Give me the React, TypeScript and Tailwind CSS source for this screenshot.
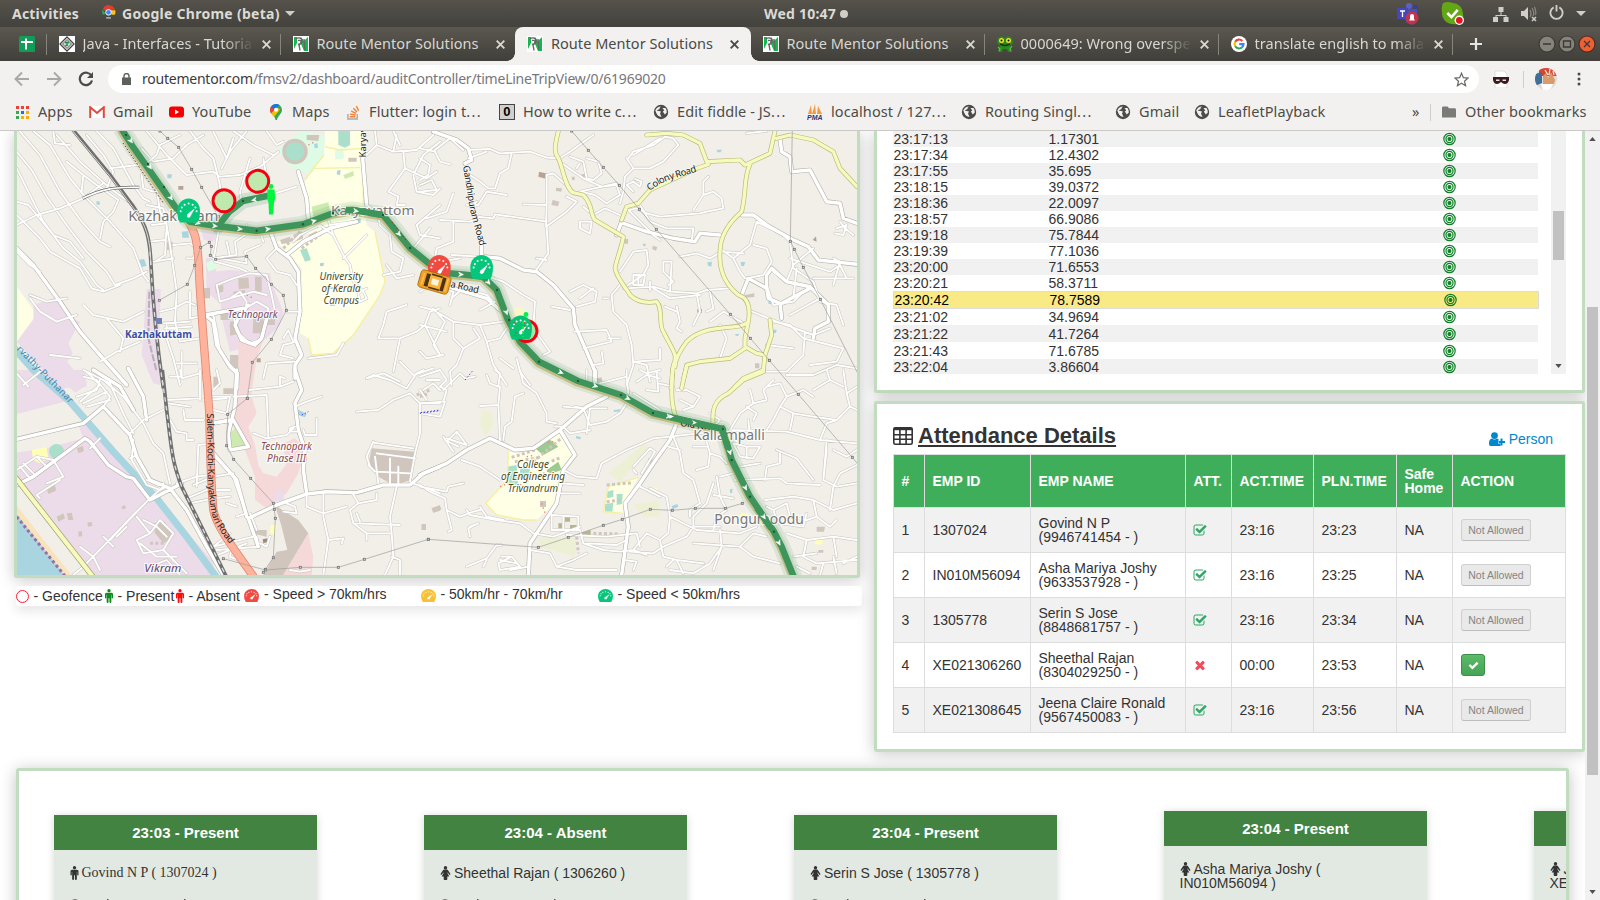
import React from "react";

type Kids = { children?: React.ReactNode };

/* ---------- shared icons ---------- */

const CHECK_SQUARE =
  "M1472 930v318q0 119-84.5 203.5t-203.5 84.5h-832q-119 0-203.5-84.5t-84.5-203.5v-832q0-119 84.5-203.5t203.5-84.5h832q63 0 117 25 15 7 18 23 3 17-9 29l-49 49q-14 14-32 8-23-6-45-6h-832q-66 0-113 47t-47 113v832q0 66 47 113t113 47h832q66 0 113-47t47-113v-254q0-13 9-22l64-64q15-15 35-7t20 29zm231-489l-814 814q-24 24-57 24t-57-24l-430-430q-24-24-24-57t24-57l110-110q24-24 57-24t57 24l263 263 647-647q24-24 57-24t57 24l110 110q24 24 24 57t-24 57z";
const TIMES =
  "M1490 1322q0 40-28 68l-136 136q-28 28-68 28t-68-28l-294-294-294 294q-28 28-68 28t-68-28l-136-136q-28-28-28-68t28-68l294-294-294-294q-28-28-28-68t28-68l136-136q28-28 68-28t68 28l294 294 294-294q28-28 68-28t68 28l136 136q28 28 28 68t-28 68l-294 294 294 294q28 28 28 68z";
const CHECK =
  "M1671 566q0 40-28 68l-724 724-136 136q-28 28-68 28t-68-28l-136-136-362-362q-28-28-28-68t28-68l136-136q28-28 68-28t68 28l294 295 656-657q28-28 68-28t68 28l136 136q28 28 28 68z";

function Glyph({ d, className }: { d: string; className: string }) {
  return (
    <svg viewBox="0 0 1792 1792" className={className} fill="currentColor">
      <path d={d} />
    </svg>
  );
}

function Male({ className }: { className: string }) {
  return (
    <svg viewBox="0 0 9 14" className={"shrink-0 " + className} fill="currentColor">
      <circle cx="4.500" cy="1.700" r="1.650" />
      <path d="M2 3.700h5q1.500 0 1.500 1.500v3.600q0 .7-.65.7t-.65-.7V5.800h-.35v7.200q0 .9-.95.9t-.95-.9V9.300h-.9V13q0 .9-.95.9t-.95-.9V5.800H1.800v3q0 .7-.65.7T.5 8.800V5.200Q.5 3.700 2 3.700z" />
    </svg>
  );
}

function Female({ className }: { className: string }) {
  return (
    <svg viewBox="0 0 10 14" className={"shrink-0 " + className} fill="currentColor">
      <circle cx="5" cy="1.7" r="1.7" />
      <path d="M3.6 3.6h2.8c.5 0 .9.3 1.1.6l2.3 3.5c.4.8-.6 1.5-1.2.8L7 6.2v1l1.8 3.3H6.8v2.7c0 .5-.3.8-.8.8H4c-.5 0-.8-.3-.8-.8v-2.7H1.2L3 7.2v-1L1.4 8.5c-.6.7-1.6 0-1.2-.8l2.3-3.5c.2-.3.6-.6 1.1-.6z" />
    </svg>
  );
}

function GaugeShape({ color }: { color: string }) {
  const dots = [-85, -58, -30, 0, 30, 58, 85];
  return (
    <>
      <path d="M4 36Q0 30 0 18A17 18 0 0 1 34 18Q34 30 30 36z" fill={color} />
      {dots.map((a) => (
        <circle
          key={a}
          cx={17 + 12 * Math.sin((a * Math.PI) / 180)}
          cy={20 - 12.5 * Math.cos((a * Math.PI) / 180)}
          r="1.5"
          fill="#fff"
        />
      ))}
      <path d="M15 24l10-8-6 11z" fill="#fff" stroke="#fff" strokeWidth="1" />
      <circle cx="17" cy="26" r="2.6" fill="#fff" />
    </>
  );
}

function LegendGauge({ color }: { color: string }) {
  return (
    <svg viewBox="0 0 34 36" preserveAspectRatio="none" className="h-[13px] w-[15px]">
      <GaugeShape color={color} />
    </svg>
  );
}

/* ---------- desktop top bar ---------- */

function TopBar() {
  return (
    <div className="flex h-[27px] items-center bg-linear-to-b from-[#55524b] to-[#43423d] text-[14px] font-bold text-[#dcdad5]">
      <div className="w-[101px] pl-[12px] tracking-[0.2px]">Activities</div>
      <svg viewBox="0 0 16 16" className="-mt-[2px] h-[15px] w-[15px]">
        <path d="M8 0a8 8 0 0 1 7 5H8a3.500 3.500 0 0 0-3 2L2 4a7 7 0 0 1 6-4z" fill="#e33b2e" />
        <path d="M1.500 4.500L5 9.500l-3 1A8 8 0 0 1 1.500 4.500z" fill="#2da94f" />
        <path d="M10.500 5.500H15.200a8 8 0 0 1-.5 5l-3.500 0z" fill="#fcc31e" />
        <circle cx="8" cy="7.800" r="3.300" fill="#fff" />
        <circle cx="8" cy="7.800" r="2.500" fill="#4285f4" />
        <path d="M5.500 13h5v1.500h-5z" fill="#bbb" />
      </svg>
      <div className="ml-[6px] w-[163px] whitespace-nowrap tracking-[0.27px]">Google Chrome (beta)</div>
      <svg viewBox="0 0 10 5" className="h-[5px] w-[10px]" fill="#d0cec9">
        <path d="M0 0h10L5 5z" />
      </svg>
      <div className="ml-[469px] w-[76px] pb-[1px] whitespace-nowrap tracking-[0.22px]">Wed 10:47</div>
      <div className="h-[8px] w-[8px] rounded-full bg-[#d0cec9]" />
      <svg viewBox="0 0 22 22" className="ml-[549px] h-[22px] w-[22px]">
        <circle cx="12" cy="3" r="3" fill="#5b5fc7" />
        <circle cx="18.500" cy="4" r="2.300" fill="#3b3e94" />
        <path d="M7 6h13v9a6 6 0 0 1-12 1z" fill="#4a4fb5" />
        <rect x="0" y="5" width="11" height="11" fill="#4648b8" />
        <path d="M3 8h5M5.500 8v6" stroke="#fff" strokeWidth="1.300" />
        <circle cx="15" cy="15" r="6.500" fill="#c4314b" />
        <path d="M12 17.500h6l-1-1.500v-3a2 2 0 0 0-4 0v3z" fill="#fff" />
      </svg>
      <svg viewBox="0 0 22 22" className="ml-[22px] h-[23px] w-[23px]">
        <path d="M2 1q5-2 9 0a10 10 0 0 1 10 10q1 6-1 9-5 2-9 1A10 10 0 0 1 1 10q-1-6 1-9z" fill="#62a714" />
        <path d="M6 10.500l4 4 6-7" stroke="#fff" strokeWidth="2.500" fill="none" />
        <circle cx="17.500" cy="17.500" r="4.500" fill="#fff" />
        <circle cx="17.500" cy="17.500" r="3.200" fill="#e81123" />
      </svg>
      <svg viewBox="0 0 16 16" className="ml-[29px] h-[16px] w-[16px]" fill="#d0cec9">
        <path d="M5.500 1h5v5h-5zM0 11h5v5H0zM10.500 11h5v5h-5zM7.500 6h1v3h5v2h-1v-1h-9v1h-1V9h5z" />
      </svg>
      <svg viewBox="0 0 16 16" className="ml-[12px] h-[16px] w-[16px]" fill="#d0cec9">
        <path d="M0 5h3l4-4v13l-4-4H0z" />
        <path d="M9 4q2 3.500 0 7M11 2q3 5 1 8M13.500 1q2 5 1 8" stroke="#8b8984" fill="none" strokeWidth="1.200" />
        <path d="M11 11l4 4m0-4l-4 4" stroke="#d0cec9" strokeWidth="1.500" />
      </svg>
      <svg viewBox="0 0 16 16" className="-mt-[2px] ml-[12px] h-[15px] w-[15px]" fill="none" stroke="#d0cec9" strokeWidth="2">
        <path d="M5 2.500a6.500 6.500 0 1 0 6 0M8 0v7" />
      </svg>
      <svg viewBox="0 0 10 5" className="ml-[12px] h-[5px] w-[10px]" fill="#d0cec9">
        <path d="M0 0h10L5 5z" />
      </svg>
    </div>
  );
}

/* ---------- tab strip ---------- */

function RouteLogo() {
  return (
    <svg viewBox="0 0 16 16" className="h-[16px] w-[16px] shrink-0">
      <rect width="16" height="16" fill="#fff" />
      <path d="M1 1h3v6L1 13zM8 1l3 4 4-4v14h-4l-3-7z" fill="#0dba4b" />
      <path d="M3 2.500q5-2 6 2 .500 3-3 4l1 6M5 4.500q3-.5 3 1.500 0 2-3 2.500M11 3l1 11" stroke="#6b6466" fill="none" strokeWidth="1.400" />
    </svg>
  );
}
function JavaLogo() {
  return (
    <svg viewBox="0 0 16 16" className="h-[16px] w-[16px] shrink-0">
      <rect width="16" height="16" fill="#fff" />
      <path d="M8 1l7 7-7 7-7-7z" fill="#fff" stroke="#444" strokeWidth="1.300" />
      <path d="M8 3.500L12.500 8 8 12.500 3.500 8z" fill="#c8dccd" stroke="#555" />
      <path d="M6 6.500h4M8 6v4M6 10l3-1" stroke="#1f8a46" strokeWidth="1.300" />
    </svg>
  );
}
function FrogLogo() {
  return (
    <svg viewBox="0 0 16 16" className="h-[16px] w-[16px] shrink-0">
      <path d="M1 2l4-2 3 2 3-2 4 2 1 5-3 3 2 6h-4l-1-3-4 0-1 3H1l2-6-3-3z" fill="#2b8a1e" />
      <path d="M3 8q5 3 10 0" stroke="#123d10" fill="none" strokeWidth="1.500" />
      <path d="M1 11l2 2-1 2M15 10l-2 3 1 2" stroke="#54c13a" fill="none" strokeWidth="1.300" />
      <circle cx="4.500" cy="4.500" r="2.500" fill="#f4e02c" />
      <circle cx="11.500" cy="4.500" r="2.500" fill="#f4e02c" />
      <circle cx="4.500" cy="4.500" r="1" fill="#111" />
      <circle cx="11.500" cy="4.500" r="1" fill="#111" />
    </svg>
  );
}
function GoogleLogo() {
  return (
    <svg viewBox="0 0 16 16" className="h-[16px] w-[16px] shrink-0" fill="none" strokeWidth="2.200">
      <circle cx="8" cy="8" r="8" fill="#fff" />
      <path d="M11.300 4.900A4.500 4.500 0 0 0 4.200 5.700" stroke="#ea4335" />
      <path d="M4.200 5.700a4.500 4.500 0 0 0 0 4.600" stroke="#fbbc05" />
      <path d="M4.200 10.300a4.500 4.500 0 0 0 6.900 1" stroke="#34a853" />
      <path d="M11 11.400A4.500 4.500 0 0 0 12.500 8.100H8.200" stroke="#4285f4" />
    </svg>
  );
}

function Cross({ color }: { color: string }) {
  return (
    <svg viewBox="0 0 9 9" className="h-[9px] w-[9px] shrink-0" stroke={color} strokeWidth="1.900">
      <path d="M.7.700l7.600 7.600M8.300.7L.7 8.300" />
    </svg>
  );
}

type TabProps = { icon: React.ReactNode; label: string; active?: boolean; sep?: boolean; fade?: boolean };

function Tab({ icon, label, active, sep, fade }: TabProps) {
  return (
    <div
      className={
        active
          ? "relative flex h-[34px] w-[236px] items-center rounded-t-[8px] bg-[#f2f1f0] pl-[12px] text-[#4a4a46]"
          : "relative flex h-[34px] w-[234px] items-center pl-[11.500px] text-[#d9d7d2]"
      }
    >
      {active && (
        <>
          <span className="absolute -left-[8px] bottom-0 h-[8px] w-[8px] bg-[radial-gradient(circle_at_0_0,transparent_7.5px,#f2f1f0_8px)]" />
          <span className="absolute -right-[8px] bottom-0 h-[8px] w-[8px] bg-[radial-gradient(circle_at_100%_0,transparent_7.5px,#f2f1f0_8px)]" />
        </>
      )}
      {icon}
      <span
        className={
          fade
            ? "ml-[8px] w-[171px] whitespace-nowrap [mask-image:linear-gradient(to_right,#000_82%,transparent)]"
            : "ml-[8px] w-[171px] whitespace-nowrap"
        }
      >
        {label}
      </span>
      <span className="ml-[8px] flex">
        <Cross color={active ? "#4a4a46" : "#d9d7d2"} />
      </span>
      {sep && <span className="ml-auto h-[21px] w-px bg-[#86847d]" />}
    </div>
  );
}

function TabStrip() {
  return (
    <div className="flex h-[34px] items-center bg-linear-to-b from-[#5b5850] to-[#403f3a] text-[14.500px] tracking-[0.04px]">
      <div className="flex h-full w-[47px] items-center pl-[19px]">
        <svg viewBox="0 0 16 16" className="h-[16px] w-[16px]">
          <rect width="16" height="16" rx="1.500" fill="#0f9d58" />
          <path d="M2 6h12M7 2.500V13.500" stroke="#fff" strokeWidth="2" />
        </svg>
        <span className="ml-[11px] h-[21px] w-px bg-[#86847d]" />
      </div>
      <Tab icon={<JavaLogo />} label="Java - Interfaces - Tutoria" sep fade />
      <Tab icon={<RouteLogo />} label="Route Mentor Solutions" />
      <Tab icon={<RouteLogo />} label="Route Mentor Solutions" active />
      <Tab icon={<RouteLogo />} label="Route Mentor Solutions" sep />
      <Tab icon={<FrogLogo />} label="0000649: Wrong overspe" sep fade />
      <Tab icon={<GoogleLogo />} label="translate english to mala" sep fade />
      <svg viewBox="0 0 12 12" className="ml-[17px] h-[12px] w-[12px]" stroke="#e8e6e1" strokeWidth="2.200">
        <path d="M6 0v12M0 6h12" />
      </svg>
      <svg viewBox="0 0 58 18" className="ml-auto mr-[4px] h-[18px] w-[58px]" strokeWidth="1.200">
        <g fill="#85837b" stroke="#3a3935">
          <circle cx="9" cy="9" r="8" />
          <circle cx="29" cy="9" r="8" />
        </g>
        <circle cx="49" cy="9" r="8" fill="#ee5f33" stroke="#4a2d22" />
        <path d="M5 9h8M25.500 6h7v6h-7zM46 6l6 6m0-6l-6 6" fill="none" stroke="#3a3935" strokeWidth="1.300" />
      </svg>
    </div>
  );
}

/* ---------- toolbar ---------- */

function Toolbar() {
  return (
    <div className="flex h-[36px] items-center bg-[#f2f1f0]">
      <svg viewBox="0 0 16 16" className="ml-[14px] h-[16px] w-[16px]" fill="none" stroke="#a9a8a5" strokeWidth="1.900">
        <path d="M15 8H2M8 1.500L1.500 8 8 14.500" />
      </svg>
      <svg viewBox="0 0 16 16" className="ml-[16px] h-[16px] w-[16px]" fill="none" stroke="#a9a8a5" strokeWidth="1.900">
        <path d="M1 8h13M8 1.500L14.500 8 8 14.500" />
      </svg>
      <svg viewBox="0 0 16 16" className="ml-[16px] h-[16px] w-[16px]">
        <path d="M13.500 5A6.200 6.200 0 1 0 14 9.500" fill="none" stroke="#4a4a46" strokeWidth="2.200" />
        <path d="M15 1v6H9z" fill="#4a4a46" />
      </svg>
      <div className="ml-[14px] flex h-[28px] w-[1371px] items-center rounded-full bg-white pl-[14px] text-[14px]">
        <svg viewBox="0 0 9 12" className="h-[12px] w-[9px]">
          <path d="M0 4.500h9V12H0z" fill="#5f5f5c" />
          <path d="M2 5V3a2.500 2.500 0 0 1 5 0v2" fill="none" stroke="#5f5f5c" strokeWidth="1.400" />
        </svg>
        <span className="ml-[11px] pb-[1px] whitespace-nowrap tracking-[-0.23px] text-[#77767a]">
          <span className="text-[#3a3a3a]">routementor.com</span>/fmsv2/dashboard/auditController/timeLineTripView/0/61969020
        </span>
        <svg viewBox="0 0 24 24" className="ml-auto mr-[10px] h-[15px] w-[15px]" fill="none" stroke="#6b6b68" strokeWidth="2">
          <path d="M12 2l3 7 7.500.7-5.700 5 1.700 7.300-6.500-3.900L5.500 22l1.700-7.300-5.700-5L9 9z" />
        </svg>
      </div>
      <svg viewBox="0 0 18 18" className="ml-[13px] h-[18px] w-[18px]">
        <path d="M3 1h9l3 3v14H3z" fill="#fff" stroke="#ddd" />
        <path d="M1 7h16v3q-1 4-4 4-2 0-4-2-2 2-4 2-3 0-4-4z" fill="#3a1a1c" />
        <path d="M4 9.500h3.500v1.500H4zM10.500 9.500H14v1.500h-3.500z" fill="#e8dede" />
      </svg>
      <span className="ml-[13px] h-[17px] w-px bg-[#cfcecb]" />
      <svg viewBox="0 0 22 22" className="ml-[11px] h-[22px] w-[22px]">
        <clipPath id="av">
          <circle cx="11" cy="11" r="11" />
        </clipPath>
        <g clipPath="url(#av)">
          <rect width="22" height="22" fill="#e2dcd4" />
          <path d="M4 0h18v8H4z" fill="#d8452e" />
          <path d="M0 6l7-2v11l-7 3z" fill="#3f6f99" />
          <path d="M8 8l3-3 2 5 3-6 4 8-1 4H8z" fill="#d99a6c" />
          <path d="M10 2l3 5M15 1l-1 6M18 3l1 4" stroke="#f5e9e2" strokeWidth="1.300" />
          <path d="M6 16h12l-3 6H8z" fill="#fff" />
        </g>
      </svg>
      <svg viewBox="0 0 4 14" className="ml-[20px] h-[14px] w-[4px]" fill="#4a4a46">
        <circle cx="2" cy="2" r="1.500" />
        <circle cx="2" cy="7" r="1.500" />
        <circle cx="2" cy="12" r="1.500" />
      </svg>
    </div>
  );
}

/* ---------- bookmarks ---------- */

function Globe() {
  return (
    <svg viewBox="0 0 16 16" className="h-[16px] w-[16px]">
      <circle cx="8" cy="8" r="7.200" fill="#4b4b48" />
      <path d="M8 2.500q-2 1-1.500 2.500l-3 1.500 4.500 1-1 2 1.500 3.500q-4-.5-5.200-4L2.300 6.500Q4 2.700 8 2.500zM9.500 4l3 0q1.500 2 1.300 4.500l-2 2-2-3 1.500-1z" fill="#f2f1f0" />
    </svg>
  );
}

function Bookmark({ icon, w, cut, children }: Kids & { icon: React.ReactNode; w: string; cut?: boolean }) {
  return (
    <div className={"flex shrink-0 items-center whitespace-nowrap " + w}>
      <span className="flex w-[16px] justify-center">{icon}</span>
      <span className="ml-[8px]">
        {children}
        {cut && <span className="tracking-[1.4px]">...</span>}
      </span>
    </div>
  );
}

function BookmarkBar() {
  return (
    <div className="flex h-[34px] items-center border-b border-[#cbc9c6] bg-[#f2f1f0] pb-[3px] pl-[14px] text-[14.500px] tracking-[0.1px] text-[#4c4c48]">
      <Bookmark
        w="w-[75px]"
        icon={
          <svg viewBox="0 0 13 13" className="h-[13px] w-[13px]">
            <path d="M0 0h3v3H0zM5 0h3v3H5zM10 0h3v3h-3z" fill="#ea4335" />
            <path d="M0 5h3v3H0z" fill="#34a853" />
            <path d="M5 5h3v3H5z" fill="#1a73e8" />
            <path d="M10 5h3v3h-3zM5 10h3v3H5zM10 10h3v3h-3z" fill="#fbaf05" />
            <path d="M0 10h3v3H0z" fill="#34a853" />
          </svg>
        }
      >
        Apps
      </Bookmark>
      <Bookmark
        w="w-[79px]"
        icon={
          <svg viewBox="0 0 16 12" className="h-[12px] w-[16px]">
            <path d="M1 0h14v12H1z" fill="#fff" />
            <path d="M1.200 12V1.200L8 7l6.800-5.800V12" fill="none" stroke="#dd4b3e" strokeWidth="2" />
          </svg>
        }
      >
        Gmail
      </Bookmark>
      <Bookmark
        w="w-[100px]"
        icon={
          <svg viewBox="0 0 15 11" className="h-[12px] w-[15px]">
            <rect width="15" height="11" rx="3" fill="#f60002" />
            <path d="M6 3l4 2.500L6 8z" fill="#fff" />
          </svg>
        }
      >
        YouTube
      </Bookmark>
      <Bookmark
        w="w-[77px]"
        icon={
          <svg viewBox="0 0 12 16" className="h-[16px] w-[12px]">
            <path d="M6 0a6 6 0 0 1 6 6c0 4-4 5-5 10H5.500C5 11 0 10 0 6a6 6 0 0 1 6-6z" fill="#34a853" />
            <path d="M6 0a6 6 0 0 0-5 2.500L4.500 6 9.500 1A6 6 0 0 0 6 0z" fill="#1a73e8" />
            <path d="M1 2.500L4.500 6 1 9.500Q-1 6 1 2.500z" fill="#ea4335" />
            <path d="M1 9.500L7 3.500l3 2L4 13z" fill="#fbbc04" />
            <circle cx="6" cy="5.800" r="2" fill="#fff" />
          </svg>
        }
      >
        Maps
      </Bookmark>
      <Bookmark
        w="w-[154px]"
        cut
        icon={
          <svg viewBox="0 0 14 16" className="h-[15px] w-[13px]" fill="none" strokeWidth="1.500">
            <path d="M1 9.500V15h10V9.500" stroke="#a8a9a8" />
            <path d="M3 12.500h6M3.200 9.700l6 1M4.500 6.500l5.300 2.500M6.800 3.500l4 4M10 1l2.500 5" stroke="#ef8236" />
          </svg>
        }
      >
        Flutter: login t
      </Bookmark>
      <Bookmark
        w="w-[154px]"
        cut
        icon={
          <span className="flex h-[16px] w-[16px] items-center justify-center border-[1.500px] border-[#444] bg-[#cfcfcf] font-['Liberation_Sans'] text-[13px] font-bold text-black">
            0
          </span>
        }
      >
        How to write c
      </Bookmark>
      <Bookmark w="w-[154px]" icon={<Globe />} cut>
        Edit fiddle - JS
      </Bookmark>
      <Bookmark
        w="w-[154px]"
        cut
        icon={
          <svg viewBox="0 0 16 16" className="h-[16px] w-[16px]">
            <path d="M4 1l1 9H1zM8 0l1 10H5zM11 2l4 8h-5z" fill="#f29b3e" />
            <text x="0" y="16" fontSize="6.500" fontWeight="bold" fontStyle="italic" fontFamily="Liberation Sans" fill="#33326b" textLength="15.500" lengthAdjust="spacingAndGlyphs" letterSpacing="0">
              PMA
            </text>
          </svg>
        }
      >
        localhost / 127
      </Bookmark>
      <Bookmark w="w-[154px]" icon={<Globe />} cut>
        Routing Singl
      </Bookmark>
      <Bookmark w="w-[79px]" icon={<Globe />}>
        Gmail
      </Bookmark>
      <Bookmark w="w-[218px]" icon={<Globe />}>
        LeafletPlayback
      </Bookmark>
      <span className="w-[18px]">»</span>
      <span className="h-[17px] w-px bg-[#cfcecb]" />
      <svg viewBox="0 0 15 12" className="ml-[11px] h-[12px] w-[14px]" fill="#7a7a77">
        <path d="M0 1.500Q0 0 1.500 0H6l1.500 2H13.500Q15 2 15 3.500V12H0z" />
      </svg>
      <span className="ml-[9px] whitespace-nowrap">Other bookmarks</span>
    </div>
  );
}

/* ---------- map ---------- */

/* The map is authored as four quadrants, each at three times its drawn size. */
type Quad = "nw" | "ne" | "sw" | "se";
const QUAD: Record<Quad, string> = {
  nw: "translate(0 125) scale(.33333)",
  ne: "translate(420 125) scale(.33333)",
  sw: "translate(0 370) scale(.33333)",
  se: "translate(420 370) scale(.33333)",
};

const AREAS: Record<Quad, [string, string][]> = {
  nw: [
    ["#ffffe5", "M975 18L1090 18 1090 235 1100 300 1125 320 1155 470 1140 510 1060 630 1000 685 935 690 925 640 900 625 905 430 830 350 925 335 915 165 940 130 972 90z"],
    ["#ddfbe5", "M832 72L905 18 975 35 970 90 935 145 905 140 870 125z"],
    ["#ecdbe8", "M690 435L810 445 815 475 850 560 840 600 800 640 765 660 690 680 668 590 660 520 650 500 640 440z"],
    ["#ecdbe8", "M600 310L655 320 640 350 612 345zM618 400L645 400 655 530 620 500z"],
    ["#f5d9d9", "M715 650L790 645 770 700 755 800 715 800z"],
    ["#ecdbe8", "M100 540L172 515 205 575 240 590 205 655 218 685 202 710 260 785 180 790 50 650 100 585z"],
    ["#ffffe5", "M50 485L75 520 100 555 100 580 50 650z"],
    ["#ecdbe8", "M440 492L482 492 478 640 480 780 460 775 425 690z"],
    ["#aae0cb", "M1015 18H1050V60L1035 68 1015 60zM900 375L920 370 933 405 915 410z"],
    ["#cdebb0", "M935 245L985 232 990 262 940 275zM1030 150L1060 138 1062 152 1035 162z"],
    ["#ddfbe5", "M618 415L645 400 650 430 625 440zM1005 75L1030 70 1032 100 1006 104z"],
    ["#d1c6bd", "M715 460L745 458 748 490 716 492zM765 455L785 455 785 500 765 500zM690 590L710 588 722 625 690 632zM760 580L790 580 788 625 758 625zM800 560L825 560 825 600 800 600zM660 560L690 560 690 585 662 585zM920 30L958 30 955 48 920 45zM1045 98L1070 98 1070 110 1045 110zM610 490L630 488 630 520 612 520zM645 485L670 480 670 500 648 505zM700 500L735 495 735 510 700 515zM690 690L715 690 715 730 690 730zM720 740L748 735 748 770 722 770zM500 350L518 350 518 375 500 375z"],
    ["#b8a295", "M535 183L550 183 550 194 535 194zM770 700L782 700 782 712 770 712z"],
    ["#a8d5e0", "M545 320L565 318 567 338 547 338zM416 405L432 402 440 422 424 427zM290 228L300 230 298 241 289 238zM502 148L516 148 514 160 502 160zM1068 282L1082 280 1082 294 1070 294zM942 58L952 54 954 68 944 70zM1012 136L1022 136 1020 150 1010 148zM960 415L972 413 970 424 960 423z"],
    ["#d1c6bd", "M840 345L870 335 875 350 845 358zM880 330L905 318 910 340 885 350zM925 330L950 318 955 332 930 345zM1055 480L1075 478 1075 490 1055 492z"],
  ],
  ne: [
    ["#b8a295", "M357 140L382 146 380 162 355 155zM832 552L846 552 846 563 832 563zM1178 345L1188 334 1190 350z"],
    ["#d1c6bd", "M398 225L418 230 414 244 394 240zM408 188L426 190 424 200 408 198zM455 155L465 155 463 166 456 165zM485 147L496 147 496 157 485 157zM698 362L712 366 708 377 697 373zM612 342L625 342 624 356 614 356zM975 510L1003 505 1003 516 976 518zM670 355L678 358 675 364 669 362z"],
    ["#a8d5e0", "M890 74L906 74 902 82 892 82zM862 412L876 410 874 425 864 422zM962 411L976 411 972 423 964 423zM1045 518L1058 520 1058 538 1045 536zM945 627L957 627 955 633 947 632zM1058 614L1070 614 1068 624 1059 624z"],
    ["#fbf6c9", "M283 550L308 545 315 565 290 585 280 570z"],
  ],
  sw: [
    ["#ecdbe8", "M50 0L175 0 205 92 50 132z"],
    ["#ecdbe8", "M160 0L255 0 260 45 225 68z"],
    ["#ecdbe8", "M235 165L275 165 470 385 640 575 640 615 270 615 50 325 50 248 150 232 250 205zM440 0L480 0 475 40z"],
    ["#a8d5e0", "M50 430L205 620 50 620z"],
    ["#f5d9d9", "M715 -5L757 -5 755 80 770 130 745 170 765 225 775 285 790 310 830 320 858 285 850 220 885 205 915 240 895 310 860 370 800 415 765 390 765 320 735 240 695 160z"],
    ["#d1c6bd", "M825 405L855 425 895 450 925 490 850 615 790 615 830 545 862 540 845 470z"],
    ["#f5d9d9", "M925 490L940 560 935 615 850 615z"],
    ["#ecdbe8", "M825 362L855 362 850 390 820 395z"],
    ["#d1c6bd", "M1115 235L1245 245 1235 330 1180 345 1135 320 1105 285z"],
    ["#ffffb8", "M95 240L140 232 145 265 120 280 100 270zM812 465L830 465 826 495 810 490z"],
    ["#cdebb0", "M690 190L708 172 735 228 695 235z"],
    ["#a8d5e0", "M892 118L920 132 915 142 895 135z"],
    ["#d1c6bd", "M230 235L248 228 252 243 236 250zM140 355L165 345 168 362 145 372zM170 440L190 430 195 445 175 455zM200 430L215 428 220 450 205 450zM262 458L275 455 277 468 264 470zM235 485L245 483 247 498 236 500zM365 410L375 405 378 415 366 418zM1265 463L1278 463 1278 480 1265 480zM1295 415L1320 405 1320 422 1300 428zM460 460L495 455 520 500 490 520 465 490zM640 20L660 20 660 50 640 50zM670 55L700 55 700 72 670 72zM765 480L800 480 800 500 765 492z"],
    ["#a08a7c", "M788 508L802 505 802 516 790 520z"],
  ],
  se: [
    ["#ffffe5", "M265 245L300 250 420 180 440 230 470 255 420 330 405 400 350 450 310 450 230 435 197 400 262 330z"],
    ["#abe0c4", "M262 290L290 285 295 345 262 345z"],
    ["#9ccb92", "M345 235L385 205 415 230 370 255zM380 300L415 275 425 300 390 312z"],
    ["#aae0cb", "M300 295L330 290 328 325 300 325z"],
    ["#ffffe5", "M565 350L655 322 640 350 625 380 610 430 550 425z"],
    ["#eef0d5", "M680 215L685 240 600 335 565 310zM185 120L215 125 220 165 195 200 180 165zM355 500L470 505 465 560 360 530zM635 405L715 390 720 440 670 440zM478 485L520 480 500 510z"],
    ["#aae0cb", "M560 365L580 360 580 380 562 385zM590 372L608 372 606 402 590 405zM555 402L580 398 577 425 555 425z"],
    ["#d1c6bd", "M360 393L378 393 378 411 360 411zM35 415L60 408 65 418 40 428zM5 463L18 463 18 480 5 480zM1190 470L1215 470 1212 485 1190 485zM1175 590L1190 590 1190 600 1175 600zM685 265L698 262 697 280 687 280zM530 25L545 22 547 38 532 38zM1195 540L1210 540 1210 548 1195 548zM1005 -20L1018 -20 1018 -5 1005 -5zM0 72L20 68 22 78 0 84z"],
    ["#b5b58e", "M415 460L427 460 427 475 415 475zM450 465L470 465 468 478 450 478zM480 490L512 480 512 495 485 502zM435 440L450 440 450 455 435 455z"],
    ["#a8d5e0", "M755 408L772 402 775 410 758 418zM580 120L602 118 602 125 582 125zM930 358L938 356 936 370 930 368zM468 198L484 202 480 208 468 205z"],
    ["#ffffb8", "M700 352L712 355 708 366 700 360zM960 432L985 430 985 445 962 442zM1185 508L1208 510 1206 525 1184 522z"],
  ],
};

const MINOR: Record<Quad, string[]> = {
  nw: [
    "M50 80L95 135 140 215 200 300 260 380 320 440 345 480 400 460 440 440",
    "M60 20L120 90 180 200 245 290 300 350 330 365",
    "M50 130L80 190 130 290 190 370 240 410 290 480 310 495",
    "M50 230L85 240 160 330 210 350 250 400",
    "M50 270L120 340 150 380 240 430 275 490 310 500 360 480",
    "M100 18L150 60 210 160 255 215 330 290 400 370 430 450 445 470",
    "M50 300L110 270 180 250 250 220 310 175",
    "M170 30L240 110 330 190 400 240",
    "M250 150L290 180 355 225 340 260 310 290 300 340",
    "M260 30L310 90 340 140 320 190 300 200",
    "M290 18L340 70 400 180 430 220 450 230",
    "M330 130L410 120 440 115 470 90 480 60 540 30",
    "M160 20L165 55 210 60M200 110L250 150 245 200",
    "M425 70L460 110 520 100 560 60 610 30",
    "M440 18L500 90 560 150 640 140 660 155 720 150 780 125 835 80",
    "M570 18L610 70 640 100 660 180 665 260",
    "M640 20L680 100 700 40M740 18L690 80 665 130",
    "M800 18L830 60 850 50M790 100L800 160 810 210 890 185",
    "M700 18L760 60 820 90",
    "M425 150L430 190 460 200 500 195M440 240L490 250 500 300 495 390 465 410",
    "M470 190L480 260 500 300 510 360 520 430 530 500 525 590 540 650",
    "M455 300L500 295M450 350L495 345M460 410L520 400M520 360L570 355 590 370 580 400 560 400",
    "M480 560L520 550 560 530 585 540M570 500L570 580 600 575",
    "M490 595L570 590M495 610L575 605M500 600L500 640 520 700 540 780",
    "M540 650L600 640M530 715L590 715M545 680L545 760 600 745",
    "M655 320L645 380 640 400 710 390 705 350 735 330 740 300",
    "M660 400L740 415 735 380 780 360M680 350L690 395M640 395L645 410 720 430 740 440",
    "M650 480L700 460 750 445 800 450 815 510 825 560",
    "M650 480L660 530 690 520 720 500 740 530 735 570",
    "M690 520L760 500 800 510M700 570L710 620 750 655 780 645 800 590 805 550 770 530 745 545",
    "M830 370L800 400 830 440 870 450 890 480M810 310L780 320 790 350",
    "M985 285L1000 330 1030 390 1050 420 1060 470 1090 500 1100 520 1080 530 1075 505 1100 490",
    "M990 300L1060 290M1030 400L1100 330M1000 330L960 300 900 330 880 350",
    "M1100 240L1130 260 1140 300 1170 330 1175 380 1210 400 1200 440 1150 450",
    "M1090 100L1130 60 1180 80 1190 30M1130 60L1125 18M1180 80L1250 75 1300 30",
    "M1165 200L1215 130 1210 80 1245 75M1215 130L1280 160 1310 140M1165 200L1195 215 1190 240 1215 240",
    "M1320 50L1270 90 1240 150 1250 200 1300 210 1320 190M1180 18L1200 60",
    "M1320 240L1250 300 1260 330 1320 340M1240 370L1290 310",
    "M1240 450L1190 460 1160 420M1220 540L1160 560 1150 600 1135 640 1200 640 1250 620 1275 600 1290 560 1320 550",
    "M1200 640L1190 690 1180 740M1275 600L1300 650 1320 690M1100 760L1150 745 1200 770M1200 710L1240 750 1300 730",
    "M925 700L1010 690 1030 655M885 710L800 715 790 760M890 650L850 660 840 690 880 700M850 640L865 615 880 650",
    "M50 380L90 420 120 440M90 510L140 530 200 520M90 520L120 560 170 590 230 570",
    "M300 710L350 680 420 650M320 580L370 640 360 680M430 560L370 590 280 570 250 540",
    "M620 570L640 570 650 620 660 680 690 720 710 740 712 790",
    "M860 560L900 560M750 100L720 200 725 230",
    "M260 740L300 780M240 700L150 690M70 780L120 740",
  ],
  ne: [
    "M0 70L45 80 60 110 90 118M0 100L30 120 25 150 0 165M0 180L35 165 50 195 0 200M45 75L90 40 130 75",
    "M145 75L210 72 240 85 330 80 380 98 420 100 450 80 520 30",
    "M275 85L265 130 240 145 225 190 205 190 180 170 150 150M145 100L200 80",
    "M140 240L175 240 200 200 260 210M170 275L220 280 225 268 380 290M170 230L160 240",
    "M60 285L150 290 180 275M100 205L80 260 20 280M100 290L100 350 50 370 45 400",
    "M310 238L380 240 380 150 400 145 450 190M380 240L378 305 440 260 470 230 440 215",
    "M380 305L385 385 345 440M350 400L380 405",
    "M450 95L490 110 500 160 520 165 545 145 535 110 500 100M480 115L470 130",
    "M425 115L490 160 545 185 590 180 600 210 560 235 525 210 480 200 590 175",
    "M620 100L640 130 690 130 730 110 775 60 760 40 735 35 700 60 640 80 625 100M640 130L615 155 610 200 600 235",
    "M640 200L620 180 640 170 660 185 665 170 645 162M720 40L640 90",
    "M610 260L650 250 680 265 720 275 840 265 860 260 910 250 905 220 880 200 850 210 820 255M850 210L850 170 865 155",
    "M620 250L660 290 700 330 720 345M660 240L690 290 740 310 820 310 815 345",
    "M490 245L520 270 555 250 600 270M480 290L515 290 510 325 480 310z",
    "M980 25L1040 18M1010 290L990 360 940 400 900 370M1000 360L1040 370 1055 410 1030 450 980 460M940 400L960 440 975 460",
    "M970 385L905 380 870 400 830 385 780 395",
    "M1010 290L1090 330 1110 350 1120 430 1180 470 1200 530M1110 400L1230 440 1260 420 1280 460M1180 370L1120 420 1100 470 1060 440",
    "M1150 500L1120 530 1060 540 1040 480M1120 520L1130 430M1240 480L1260 410 1240 400M1200 530L1250 540 1270 600M1180 460L1300 460",
    "M1250 310L1280 300 1270 330 1245 325M1300 330L1275 310 1260 290M600 440L640 380 680 375 685 420 670 450 610 490",
    "M640 450L675 450 670 480 640 480zM655 450L655 480M690 470L690 495M620 490L700 485 750 500 755 410 730 410 730 440 760 470 745 480",
    "M755 500L830 505 860 495 930 490M830 505L840 560 820 600M870 500L880 550 860 560M700 490L750 520 840 510",
    "M770 545L780 590 770 610 785 620M735 545L770 560M900 600L920 640 900 700M985 555L1070 590 1180 630 1230 610",
    "M1060 590L1110 600 1150 640 1230 660 1270 670 1250 710 1170 720M1040 660L1120 670M980 600L910 560 870 590",
    "M1030 740L1100 740 1150 690 1155 620M1200 520L1110 570M1100 750L1180 750 1250 720 1311 730",
    "M120 400L60 410 60 430M95 390L180 395M190 450L250 470 310 510 345 530 340 610 390 680 370 690",
    "M450 500L490 480 530 500 525 530 470 545M395 545L450 555M480 520L520 490M565 520L550 520",
    "M600 480L575 510 580 560 620 600 635 660 640 720 620 780M465 620L560 615 575 650 490 670M565 640L600 640",
    "M520 720L550 715 545 680M690 770L680 720 640 710M640 710L720 705 720 670M650 770L680 750 720 760",
    "M0 545L40 555 100 590 180 600 250 590M40 550L75 590 40 660 60 690M100 590L100 640 130 670 180 640 160 610",
    "M0 600L80 620M180 600L200 650 240 640 260 610M130 670L110 720 90 740 95 780M200 650L220 720 260 780M95 520L130 490 200 510 220 530",
    "M0 500L30 480 100 500 90 540M225 530L180 555M70 690L20 700 0 680M290 700L300 740 330 780M240 700L280 730",
  ],
  sw: [
    "M250 0L330 40 370 130 400 190M230 80L290 60 300 30M240 95L300 45M250 100L320 65M260 110L330 90",
    "M50 10L85 50M310 110L330 80 290 30 250 20M390 190L430 150 490 120M310 30L370 80 430 160 460 220 490 250 510 340",
    "M50 300L110 260 140 290 80 330 60 340M110 260L160 270 190 320 140 340M60 290L90 325M70 280L100 310M270 235L300 205",
    "M180 330L110 375 120 385M390 265L410 255M400 210L395 270 440 345 480 360 500 350M440 330L475 345 490 340",
    "M440 395L250 590 220 615M490 350L440 395 400 435 330 510M410 440L450 490 410 510 430 550 490 540 520 490 480 450 450 490",
    "M310 500L340 530M420 520L470 560 530 560M450 590L500 570 540 615M490 540L560 610M430 450L470 470 500 500",
    "M500 90L600 85M505 100L570 110M510 150L530 185 560 190 560 210 580 210M550 120L555 150 610 150M590 350L595 225 640 220M610 90L680 85",
    "M540 0L545 20 510 20M600 0L600 50 600 90M530 340L590 320 630 315M580 345L640 320 700 310M560 385L620 360 690 360M570 400L640 385 690 380",
    "M640 255L700 320 720 380 740 430M710 440L740 430M690 490L640 530M640 530L760 500M770 480L750 430M700 510L690 560 740 580M650 540L775 530 770 500",
    "M640 160L690 155 700 150M640 120L680 130 690 80 640 80M650 0L660 40 640 60M640 560L740 520",
    "M745 60L840 50 880 35M700 80L800 75 805 200M760 190L800 205 860 195 880 175M840 50L840 20 855 25M885 170L870 175 870 185 890 185M885 110L920 95 965 80",
    "M950 145L950 195 915 195 910 180M1070 125L1135 120 1180 90 1230 70M1100 25L1120 15 1170 30 1220 55M1230 70L1260 100 1260 190 1245 250 1230 335",
    "M1220 55L1250 10 1270 0M1260 100L1320 100M1270 60L1300 40 1320 60M1280 30L1320 30",
    "M1130 250L1245 265M1125 260L1135 340M1170 265L1170 345M1195 290L1195 340M1130 305L1230 310M1105 285L1125 305M1120 215L1100 260 1110 290M1120 218L1240 235",
    "M970 370L970 440 985 510 970 615M1055 365L1075 400 1050 420 1060 460 1100 490 1175 490M1075 400L1130 390 1130 370M1040 410L970 430 920 410 920 370",
    "M1190 350L1170 440 1175 490 1180 560 1155 615M1060 460L1200 465M1175 560L1200 570 1200 615M985 510L1030 505 1025 520M1240 340L1320 370M1100 490L1100 510M1070 430L1080 455",
    "M870 600L900 605 930 600M850 425L890 430 885 410 860 400M240 530L280 560 300 600M350 500L380 470M680 400L710 410M780 520L800 530 810 500",
  ],
  se: [
    "M0 20L60 0M0 100L70 95 80 60 60 50 80 30 60 0M0 130L60 140 75 95M70 60L120 10 135 25 165 20",
    "M200 15L210 40 235 50 240 10 225 0M240 50L235 105 180 108M235 105L240 210M300 0L310 40 350 70 380 130 380 155 410 160",
    "M250 210L255 170 275 155 285 80 310 70M430 110L490 115 510 165 560 155 600 130 620 100M490 115L465 110M500 190L510 115 560 115",
    "M80 215L110 185 140 225 80 205M70 200L100 245M75 210L115 230M125 270L180 290 240 330M0 345L30 365 75 385 80 420 120 440 160 425 180 420",
    "M0 350L80 365 85 350 130 340M140 420L150 435 230 450 300 460 340 490 400 500 480 470M80 420L95 480 85 485M180 410L200 440 250 450",
    "M405 170L430 170 450 190 510 180M430 300L470 320 530 325 545 280 620 240 700 205 750 200 880 185",
    "M425 310L420 360M420 340L490 345M420 370L480 370M395 435L475 440 475 480 395 480zM430 440L430 480M480 480L490 520 550 540 600 545 640 540 680 555",
    "M440 495L560 500 650 490 660 530M630 545L700 550 730 530 800 500 820 470M640 290L690 235 705 245 665 310M640 300L650 310",
    "M0 60L20 90M660 0L680 10 720 0M710 5L715 65 680 60M715 40L760 50M640 70L720 120M500 30L500 0M540 40L620 20 620 0M620 20L625 70",
    "M760 200L780 250 790 310 820 330 840 400M745 230L780 240M860 215L870 250 865 290 830 300M870 250L900 260 920 280M820 230L860 230",
    "M990 60L1000 100 960 130 930 180M985 150L990 200 960 210M1000 100L1040 90 1030 60 1060 30M980 110L1010 130 1000 150M930 180L1100 185 1200 210 1311 220",
    "M1040 50L1080 40 1100 80 1080 110 1120 130 1180 140 1250 150M1080 110L1060 150 1040 180M1100 80L1150 60 1180 80M1120 130L1110 180",
    "M1311 50L1280 70 1270 0M1280 70L1290 110 1311 120M1200 210L1220 160 1250 150 1290 110M1180 60L1230 30 1220 0M1230 30L1270 50",
    "M1220 210L1210 330 1250 350 1311 340M1070 240L1130 265 1180 330M1080 250L1080 280 1040 290 1035 330M940 220L960 260 1000 265 1020 230 980 230zM980 230L980 265",
    "M960 290L1020 280M945 330L1080 325 1100 340 1200 345M1240 240L1280 260 1311 240M1311 285L1260 310 1240 350 1230 420M1210 330L1220 240",
    "M880 340L860 400 820 440 820 470 900 470M840 400L810 420 810 440M890 320L900 380 920 420 890 440 880 480M900 320L940 310M880 375L940 385",
    "M690 355L740 380 750 440 830 480 960 490 1010 470M660 350L720 380M750 440L745 490 720 510 730 560 770 570 790 610M640 540L680 490 720 510",
    "M1035 390L1120 380 1180 390 1240 420 1311 400M1040 410L1060 420 1100 400 1110 440M1180 390L1190 440 1230 470 1250 450M1110 440L1160 450 1190 440M1060 420L1070 450",
    "M1080 460L1150 470 1160 430M1100 490L1160 510 1240 500 1311 510M1160 510L1150 560 1190 580 1311 570M1240 500L1250 560M1120 560L1190 550M1240 560L1250 610M1130 590L1170 610",
    "M820 520L960 530 1000 560 1080 580M960 530L1000 490 1040 500M900 480L905 530 880 600M905 530L870 580 820 610M770 570L850 580M750 600L820 610M740 590L760 570",
    "M245 560L275 560 300 590 240 600 235 580 270 562M240 570L290 580M270 600L325 590M140 590L200 565 230 525 245 525M190 590L200 570M330 560L325 530M330 540L390 550 410 590 470 600 590 600M410 590L460 570 500 550",
    "M500 520L590 525 620 510M610 570L650 575 640 600M150 470L175 460M150 500L145 475 170 462",
    "M1270 580L1311 560M1200 615L1210 580M880 170L900 150 870 130M800 60L840 80 820 110 790 120M770 60L800 60M780 90L820 110",
  ],
};

const WHITE_ROADS: Record<Quad, string[]> = {
  nw: [
    "M50 370L100 420 180 530 240 620 300 690 380 780",
    "M895 140L920 220 925 280 M815 330L830 370 870 400 895 440 900 560 885 640 905 690 885 720 885 760",
    "M860 390L910 350 990 310 1070 290M615 570L730 550M1088 100L1100 240M615 570L640 590 650 660 690 725 712 745 710 790",
    "M745 540L720 570 705 600 725 645 765 660 785 640 800 580",
  ],
  ne: [
    "M40 20L110 45 145 70 155 105 135 115M185 345L185 395M190 395L240 400 310 435 350 440 400 480 460 550 465 600 500 680 525 740 525 780",
    "M610 295L680 320 760 340 825 350 840 325 900 330M605 290L590 330",
    "M1080 40L1085 80 1110 95 1115 140 1170 135 1220 230 1260 235 1270 280 1311 295M965 270L1000 270 1040 300 1110 340 1165 365 1195 405 1311 418",
    "M965 510L985 460 1040 490 1045 520 1080 535 1085 580M1055 430L1100 470 1170 485 1225 540 1225 590 1185 610 1180 640M1085 535L1170 490M1040 490L1040 450 1055 430",
    "M50 470L100 490 200 520 240 555",
  ],
  sw: [
    "M50 208L250 160 310 110 390 195 410 260 450 330 510 355",
    "M385 -5L430 80 440 150M280 0L360 50 400 120M50 345L100 320 255 205 270 215 325 285 380 320 400 325 450 390 545 340",
    "M510 355L560 420 620 530 670 615M640 250L710 330 740 440",
    "M710 0L705 110 685 190 690 240 745 230 700 150 690 150M885 0L905 60 885 100 895 180 915 240 910 300 920 370",
    "M745 445L830 405 920 372 980 365 1070 368 1150 345 1230 345 1270 310 1320 290M745 445L775 530M690 150L640 160",
  ],
  se: [
    "M0 315L80 280 140 240 210 205 285 240 340 235 420 180 500 110 560 80",
    "M420 180L465 255 430 300 410 400 330 520 325 615",
    "M772 155L750 210 700 280 660 340 615 400 625 470 605 615",
    "M525 0L525 50",
  ],
};

const YELLOW_ROADS: Record<Quad, string[]> = {
  nw: [],
  ne: [
    "M415 18C405 60 400 80 415 100C430 130 435 190 460 203L490 210C520 240 510 270 525 285L610 335C605 370 590 400 585 430C590 460 620 490 630 510C650 530 680 535 710 530C730 550 715 600 730 620C760 680 775 690 760 720L753 790",
    "M680 30L740 25 790 30 840 55 860 110 960 105 975 120 1050 85 1065 18M1070 40L1110 30 1180 45 1240 80 1260 130 1311 185",
    "M605 285L620 245 655 235 690 195 830 130 865 118",
    "M990 118C970 160 980 200 965 260C930 290 900 330 900 380C895 450 930 490 955 510C990 520 990 560 985 590C960 620 860 590 800 650C770 690 765 710 765 725",
    "M985 590L975 640 975 670 930 700 840 710 800 720 785 790M975 665L1010 685 1035 690 1030 735 970 760 945 785M1050 585L1055 630 1035 690",
  ],
  sw: [],
  se: [
    "M758 -5C755 60 750 100 772 155",
    "M1030 5L970 30 925 70C880 90 875 120 880 175M800 -10L790 30",
  ],
};

const POWER: [Quad, number[][]][] = [
  ["nw", [[480, 18], [503, 40], [536, 67], [575, 133], [605, 187], [655, 274], [647, 315]]],
  ["nw", [[478, 526], [562, 478], [584, 421], [602, 367], [628, 352], [634, 364], [631, 391], [647, 403], [740, 394], [767, 430], [814, 478], [850, 511], [859, 556], [814, 643], [757, 712], [742, 820]]],
  ["sw", [[742, 85], [683, 133], [680, 227], [701, 268], [752, 325], [820, 400], [823, 418], [826, 445], [820, 563], [796, 598], [790, 607]]],
  ["sw", [[670, 566], [796, 600], [901, 592], [1015, 592], [1093, 568], [1285, 508]]],
  ["se", [[25, 508], [355, 532], [445, 502], [550, 466], [607, 448], [691, 418], [757, 421], [826, 415], [916, 415], [967, 400]]],
  ["ne", [[455, 18], [505, 76], [550, 127], [598, 181], [658, 253], [709, 313], [931, 568], [991, 640], [1048, 706]]],
  ["se", [[1048, -29], [1135, 73], [1297, 262], [1325, 296]]],
  ["ne", [[1117, 8], [1111, 349], [1123, 373], [1150, 427], [1201, 523], [1325, 768]]],
];

const ROUTE =
  "M121 128L131.700 145 175 206.700 190 221.700 216.700 226 256.700 230.700 303 224.300 333 213.300 353 210 383 215 410 248 440 272.500 463 274.500 483 276.700 496.700 290 508 320 520 341.700 539 361.700 578 381 621 395 653 413 687 421 722.700 429 731.700 460 750 496.700 774 531.700 781.700 546.700 795 580";
const SPUR = "M218 226L229 212 243 201 267 196";

const ARROWS: [number, number, number][] = [
  [131, 141, 54], [150, 167, 54], [171, 198, 54], [198, 223, 15], [215, 226, 6], [240, 229, 5], [268, 229, -8],
  [314, 221, -18], [356, 211, 8], [399, 234, 50], [461, 274.500, 2], [488.500, 282.500, 50], [506.500, 312.500, 68],
  [561, 372.500, 24], [595.500, 386, 18], [628, 398.500, 28], [669, 416.500, 14], [694.500, 422.500, 12],
  [730, 452.500, 74], [745.500, 488, 63], [764, 517, 56], [779, 543, 62], [254, 200, 168],
];

const STOPS = [
  [126, 135], [148, 164], [164, 187], [216, 226], [256.700, 230.700], [303, 224.300], [333, 213], [383, 215], [410, 248],
  [497, 290], [509, 320], [539, 361.700], [578, 381], [621, 395], [653, 413], [687, 421], [722.700, 429], [731.700, 460], [750, 496.700],
  [774, 531.700], [243, 201],
];

const quads: Quad[] = ["nw", "ne", "sw", "se"];

function Roads({ set, stroke, width }: { set: Record<Quad, string[]>; stroke: string; width: number }) {
  return (
    <g fill="none" stroke={stroke} strokeWidth={width} strokeLinejoin="round" strokeLinecap="round">
      {quads.map((q) => (
        <path key={q} transform={QUAD[q]} d={set[q].join("")} />
      ))}
    </g>
  );
}

function Marker({ x, y, color }: { x: number; y: number; color: string }) {
  return (
    <g transform={`translate(${x} ${y}) scale(.667)`}>
      <GaugeShape color={color} />
    </g>
  );
}

function Label(p: { x: number; y: number; w: number; size: number; fill: string; italic?: boolean; bold?: boolean; children: string }) {
  return (
    <text
      x={p.x}
      y={p.y}
      textLength={p.w}
      lengthAdjust="spacingAndGlyphs"
      fontSize={p.size}
      fill={p.fill}
      fontStyle={p.italic ? "italic" : "normal"}
      fontWeight={p.bold ? 700 : 400}
      stroke="#ffffff"
      strokeOpacity=".75"
      strokeWidth="2.500"
      strokeLinejoin="round"
      paintOrder="stroke"
    >
      {p.children}
    </text>
  );
}

function MapView() {
  return (
    <svg viewBox="17 131 840 444" className="block h-[444px] w-[840px]" fontFamily="'Noto Sans', sans-serif">
      <rect x="17" y="131" width="840" height="444" fill="#f2efe9" />
      {quads.map((q) => (
        <g key={q} transform={QUAD[q]}>
          {AREAS[q].map(([fill, d], i) => (
            <path key={i} d={d} fill={fill} />
          ))}
        </g>
      ))}
      {/* stadium and pond */}
      <circle cx="295" cy="151.500" r="11" fill="#aae0cb" stroke="#d1c6bd" strokeWidth="3.500" />
      <circle cx="56.500" cy="451.500" r="7.500" fill="#aae0cb" />
      {/* campus boundary */}
      <path transform={QUAD.nw} d="M1090 18L1090 235M972 90L940 130 915 165M1125 320L1155 470 1140 510 1060 630 1000 685 935 690 925 640M975 65L1020 75 1088 70M940 130L1080 128" fill="none" stroke="#f6ef9e" strokeWidth="4" />
      <path transform={QUAD.se} d="M265 245L262 330 197 400 230 435 310 450 350 450M565 350L655 322M565 350L550 425 610 430" fill="none" stroke="#f6ef9e" strokeWidth="4" />
      {/* scattered small buildings */}
      <g fill="none" stroke="#d1c6bd" strokeWidth="9" strokeDasharray="9 7">
        <path transform={QUAD.se} d="M275 262L345 240M285 275L360 262M340 275L430 200M350 290L425 262M470 500L475 550M520 490L600 492M560 345L640 338M560 395L605 390" />
        <path transform={QUAD.nw} d="M850 370L900 320M905 370L985 310M690 600L720 625M765 600L835 575" />
        <path transform={QUAD.sw} d="M470 470L510 510M450 520L500 520M1250 75L1290 60" />
      </g>
      <g fill="none" stroke="#e8837a" strokeWidth="4" strokeDasharray="4 9">
        <path transform={QUAD.se} d="M320 260L345 255M345 225L400 215M300 345L390 300M365 400L375 430M240 350L265 340" />
        <path transform={QUAD.nw} d="M740 510L760 520M745 550L740 530M925 60L945 50" />
      </g>
      {/* beach and canal */}
      <path transform={QUAD.sw} d="M44 412L215 630" stroke="#f8e3bd" strokeWidth="16" fill="none" />
      <path transform={QUAD.sw} d="M50 440L198 622" stroke="#9b6fa6" strokeWidth="9" strokeDasharray="9 8" fill="none" />
      <path transform={QUAD.sw} d="M20 -90L100 0 210 95 340 245 470 385 560 500 650 622" stroke="#a8d5e0" strokeWidth="21" fill="none" />

      <Roads set={MINOR} stroke="#cbc8c2" width={9} />
      <Roads set={WHITE_ROADS} stroke="#b3afa8" width={14} />
      <Roads set={MINOR} stroke="#ffffff" width={5.6} />
      <Roads set={WHITE_ROADS} stroke="#ffffff" width={10.5} />
      <Roads set={YELLOW_ROADS} stroke="#b9bb78" width={14} />
      <Roads set={YELLOW_ROADS} stroke="#f7fabf" width={10} />
      <path transform={QUAD.sw} d="M46 322L285 628" stroke="#9c9c68" strokeWidth="17" fill="none" />
      <path transform={QUAD.sw} d="M46 322L285 628" stroke="#f7fabf" strokeWidth="13" fill="none" />

      {/* railway */}
      <g fill="none">
        <g stroke="#707070" strokeWidth="11">
          <path transform={QUAD.nw} d="M215 10L330 150 400 245C440 300 450 340 453 420C458 520 468 640 490 790" />
          <path transform={QUAD.sw} d="M487 0L500 120C515 240 515 270 545 350L680 622" />
        </g>
        <path transform={QUAD.nw} d="M215 14L330 154 400 249C440 300 450 340 453 420" stroke="#f2efe9" strokeWidth="2.500" />
        <g stroke="#dddddd" strokeWidth="4" strokeDasharray="14 12">
          <path transform={QUAD.nw} d="M450 380C458 520 468 640 490 790" />
          <path transform={QUAD.sw} d="M487 30L500 120C515 240 515 270 545 350L680 622" />
        </g>
        <path transform={QUAD.nw} d="M448 500L445 640 470 740" stroke="#b5b0b8" strokeWidth="6" strokeDasharray="22 5" />
        <path transform={QUAD.nw} d="M248 220C310 190 350 185 418 187" stroke="#6b6b6b" strokeWidth="9" />
        <path transform={QUAD.nw} d="M248 220C310 190 350 185 418 187" stroke="#ffffff" strokeWidth="5" />
      </g>

      {/* trunk road */}
      <g fill="none">
        {[["#dd8a72", 25], ["#ffb29c", 20]].map(([c, w]) => (
          <g key={c} stroke={c as string} strokeWidth={w}>
            <path transform={QUAD.nw} d="M545 265C585 310 592 340 596 420C600 520 610 640 622 785" />
            <path transform={QUAD.sw} d="M620 20L628 130C630 250 632 330 640 420C650 470 690 520 765 626" />
          </g>
        ))}
      </g>

      {/* power lines */}
      {POWER.map(([q, pts], i) => (
        <g key={i} transform={QUAD[q]}>
          <polyline points={pts.map((p) => p.join(",")).join(" ")} fill="none" stroke="#9a9a98" strokeWidth="2" />
          {pts.map(([x, y]) => (
            <rect key={`${x}-${y}`} x={x - 3} y={y - 3} width="6" height="6" fill="#d8d5d0" stroke="#777" strokeWidth="2.500" />
          ))}
        </g>
      ))}
      <rect x="156" y="318" width="6" height="6" fill="#7381b5" />
      <g stroke="#3c3cf0" strokeWidth="3" strokeDasharray="4 6" fill="none">
        <path transform={QUAD.sw} d="M1262 128L1320 120M905 135L925 125" />
        <path transform={QUAD.se} d="M0 130L60 122M135 30L160 0" />
      </g>
      <path d="M325 288h8M330 305h5" stroke="#4aa8d8" strokeWidth="1" />

      {/* recorded trip */}
      <g fill="none" strokeLinejoin="round">
        <path d={ROUTE} transform="translate(-1 2.500)" stroke="#f0cd98" strokeWidth="6" />
        <g stroke="#2e8b4e">
          <path d={ROUTE} strokeOpacity=".12" strokeWidth="17" />
          <path d={SPUR} strokeOpacity=".16" strokeWidth="15" strokeLinecap="round" />
          <path d={ROUTE} strokeOpacity=".12" strokeWidth="11" />
        </g>
        <path d={ROUTE} stroke="#3e955c" strokeWidth="6.500" />
        <path d={SPUR} stroke="#3e955c" strokeWidth="6.500" strokeLinecap="round" />
      </g>
      <path d="M123 143L164 204M392 222L406 240" stroke="#7a3a1e" strokeWidth="1" strokeDasharray="1.500 2" />

      <Label x={128.300} y={220.700} w={90} size={13.500} fill="#777">Kazhakuttam</Label>
      <Label x={331} y={214.500} w={83.500} size={13} fill="#777">Karyavattom</Label>
      <Label x={693.300} y={440} w={71.500} size={13.500} fill="#777">Kallampalli</Label>
      <Label x={714.300} y={524} w={89.500} size={13.500} fill="#777">Pongumoodu</Label>
      <path d="M346 210L353 210 383 215M178 210L191 222M721 426L728 448M757 508L771 528" stroke="#3e955c" strokeWidth="6.500" fill="none" />
      {STOPS.map(([x, y]) => (
        <circle key={`${x}-${y}`} cx={x} cy={y} r="1.200" fill="#1d5c33" />
      ))}
      {ARROWS.map(([x, y, a]) => (
        <path key={`${x}-${y}`} d="M-2.500-2.300L2.500 0-2.500 2.300-1 0z" fill="#fff" stroke="#fff" strokeWidth=".5" transform={`translate(${x} ${y}) rotate(${a})`} />
      ))}

      <Label x={227.700} y={317.500} w={50} size={10} fill="#734a6b" italic>Technopark</Label>
      <Label x={319.500} y={279.500} w={43.500} size={10} fill="#4c4c1e" italic>University</Label>
      <Label x={321.500} y={291.500} w={39} size={10} fill="#4c4c1e" italic>of Kerala</Label>
      <Label x={323.500} y={303.500} w={35.500} size={10} fill="#4c4c1e" italic>Campus</Label>
      <Label x={125} y={337.500} w={67} size={10} fill="#3d50a0" bold>Kazhakuttam</Label>
      <Label x={261} y={449.500} w={51} size={10} fill="#8a4a50" italic>Technopark</Label>
      <Label x={267} y={461.500} w={39} size={10} fill="#8a4a50" italic>Phase III</Label>
      <Label x={144.300} y={572} w={37} size={11.500} fill="#5c4370" italic>Vikram</Label>
      <Label x={517} y={467.500} w={32} size={10} fill="#4c4c1e" italic>College</Label>
      <Label x={501} y={479.500} w={64} size={10} fill="#4c4c1e" italic>of Engineering</Label>
      <Label x={507.700} y={491.500} w={50.500} size={10} fill="#4c4c1e" italic>Trivandrum</Label>

      <defs>
        <path id="gandhi" d="M463 166L470 210 480 247" />
        <path id="colony" d="M650 191Q658 184 672 179L699 171" />
        <path id="aroad" d="M450 287L479 293.500" />
        <path id="salem" d="M207 413.500L208 480Q209 512 216 525L231 546" />
        <path id="canal" d="M10 343L64 398 130 470" />
      </defs>
      <g fontSize="9.500" fill="#222" stroke="#fff" strokeOpacity=".6" strokeWidth="1.500" paintOrder="stroke">
        <text textLength="82"><textPath href="#gandhi">Gandhipuram Road</textPath></text>
        <text textLength="51"><textPath href="#colony">Colony Road</textPath></text>
        <text textLength="29"><textPath href="#aroad">a Road</textPath></text>
        <text transform="translate(366 157.500) rotate(-90)">Karyav</text>
        <text fill="#3f87b3" stroke="none" fontSize="9.500" textLength="76"><textPath href="#canal" startOffset="9">rvathy-Puthanar</textPath></text>
        <text stroke="none" textLength="136"><textPath href="#salem">Salem-Kochi-Kanyakumari Road</textPath></text>
        <text x="680" y="426" fontSize="9" stroke="none" transform="rotate(8 680 426)">Old NH</text>
      </g>
      <path d="M680 419.500L722 429" stroke="#3e955c" strokeWidth="6" />
      <path d="M669 414.200l5 2.300-5 2.300 1.500-2.300zM692 420l5 2.800-5 2 1.500-2.300z" fill="#fff" />

      {/* geofences, employees and vehicle */}
      <g fill="#bde8ab" fillOpacity=".95" stroke="#f5000f" strokeWidth="2.900">
        <circle cx="224" cy="200.700" r="11" />
        <circle cx="257.700" cy="181.300" r="11" />
      </g>
      <circle cx="526.500" cy="331" r="10.500" fill="#a5e6a8" stroke="#f5000f" strokeWidth="2.900" />
      <g fill="#00f53c">
        <circle cx="271" cy="186.500" r="2.400" />
        <path d="M267.500 189.500h7l.8 9-1.300 4-.8 12h-4.200l-.5-12-1.300-4z" />
        <circle cx="526" cy="314.500" r="2.400" />
      </g>
      <Marker x={177.300} y={198.600} color="#06c67c" />
      <Marker x={428} y={255} color="#f04a41" />
      <Marker x={470.300} y={255} color="#06c67c" />
      <Marker x={509.300} y={315.500} color="#08c274" />
      <path d="M514 322v4m2 6l-1 4m9-14l2 8" stroke="#d83a30" strokeWidth="1.200" strokeDasharray="1.500 2" />
      <path d="M523 321v16" stroke="#00f53c" strokeWidth="1.600" strokeDasharray="3 2" />
      <g transform="translate(434.500 282) rotate(16)">
        <rect x="-15.500" y="-9" width="31" height="18" rx="3.500" fill="#f0a024" stroke="#a66a14" strokeWidth=".8" />
        <path d="M-12-6v12M12.500-6.500v13" stroke="#fac25a" strokeWidth="1.500" />
        <path d="M-9.500-6.500h4v13h-4zM7-7h3.500v14H7zM-4.500-7.500h11v1.500h-11zM-4.500 6h11v1.500h-11z" fill="#4a3416" />
        <rect x="-5.500" y="-5.500" width="12" height="11" rx="1" fill="#f9b43c" />
        <rect x="-3" y="-3" width="7" height="6" fill="#fff3dc" />
      </g>
    </svg>
  );
}

/* ---------- left column ---------- */

function Legend() {
  return (
    <div className="mt-[8px] ml-[2px] flex h-[20px] w-[846px] rounded-[3px] bg-white text-[14px] leading-[20px] whitespace-nowrap shadow-[0_5px_12px_rgba(0,0,0,0.1)]">
      <span className="mt-[4px] h-[13px] w-[13px] shrink-0 rounded-full border-[1.500px] border-[#ff1a35]" />
      <span className="ml-[4.500px] w-[70.500px]">- Geofence</span>
      <Male className="mt-[3px] h-[14px] w-[10px] text-[#0c8a1d]" />
      <span className="ml-[3.500px] w-[57.500px]">- Present</span>
      <Male className="mt-[3px] h-[14px] w-[10px] text-[#fb0d0d]" />
      <span className="ml-[3.500px] w-[55px]">- Absent</span>
      <span className="mt-[3px] flex"><LegendGauge color="#f04a41" /></span>
      <span className="-mt-[2px] ml-[5.500px] w-[156.500px]">- Speed &gt; 70km/hrs</span>
      <span className="mt-[3px] flex"><LegendGauge color="#f8c036" /></span>
      <span className="-mt-[2px] ml-[5px] w-[157px]">- 50km/hr - 70km/hr</span>
      <span className="mt-[3px] flex"><LegendGauge color="#06c67c" /></span>
      <span className="-mt-[2px] ml-[5px]">- Speed &lt; 50km/hrs</span>
    </div>
  );
}

/* ---------- right column ---------- */

const TRACK: [string, string, string][] = [
  ["23:17:13", "1.17301", "h-[16px] bg-[#f1f1f1]"],
  ["23:17:34", "12.4302", "h-[16px]"],
  ["23:17:55", "35.695", "h-[16px] bg-[#f1f1f1]"],
  ["23:18:15", "39.0372", "h-[16px]"],
  ["23:18:36", "22.0097", "h-[16px] bg-[#f1f1f1]"],
  ["23:18:57", "66.9086", "h-[16px]"],
  ["23:19:18", "75.7844", "h-[16px] bg-[#f1f1f1]"],
  ["23:19:39", "77.1036", "h-[16px]"],
  ["23:20:00", "71.6553", "h-[16px] bg-[#f1f1f1]"],
  ["23:20:21", "58.3711", "h-[16px]"],
  ["23:20:42", "78.7589", "h-[18px] w-[646px] border border-[#dcdcdc] bg-[#faea86] text-black"],
  ["23:21:02", "34.9694", "h-[16px] w-[645px]"],
  ["23:21:22", "41.7264", "h-[17px] bg-[#f1f1f1]"],
  ["23:21:43", "71.6785", "h-[17px]"],
  ["23:22:04", "3.86604", "h-[15px] bg-[#f1f1f1]"],
];

function Target() {
  return (
    <svg viewBox="0 0 14 14" className="h-[14px] w-[13px]" fill="none" stroke="#0f8026" strokeWidth="1.300">
      <circle cx="7" cy="7" r="6.100" />
      <circle cx="7" cy="7" r="3.800" />
      <circle cx="7" cy="7" r="1.500" fill="#0f8026" />
    </svg>
  );
}

function Arrow({ up }: { up?: boolean }) {
  return (
    <svg viewBox="0 0 8 5" className="h-[4px] w-[7px]" fill="#505050">
      <path d={up ? "M0 5L4 0 8 5z" : "M0 0h8L4 5z"} />
    </svg>
  );
}

function TrackPanel() {
  return (
    <section className="flex h-[262px] rounded-b-[3px] border-x-3 border-b-3 border-[#c1dcbf] bg-white pl-[16px] shadow-[0_2px_16px_rgba(0,0,0,0.22)]">
      <div className="h-[243px] w-[658px] overflow-hidden">
        {TRACK.map(([t, s, cls]) => (
          <div key={t} className={"flex w-[645px] items-center pl-[0.500px] leading-[16px] " + cls}>
            <span className="w-[155px]">{t}</span>
            <span className="w-[394.500px]">{s}</span>
            <Target />
          </div>
        ))}
      </div>
      <div className="flex h-[243px] w-[15px] flex-col items-center bg-[#f1f1f1] pt-[80px]">
        <div className="h-[49px] w-[11px] bg-[#c1c1c1]" />
        <div className="mt-auto mb-[6px] flex"><Arrow /></div>
      </div>
    </section>
  );
}

const PEOPLE = [
  ["1", "1307024", "Govind N P", "(9946741454 - )", "23:16", "23:23"],
  ["2", "IN010M56094", "Asha Mariya Joshy", "(9633537928 - )", "23:16", "23:25"],
  ["3", "1305778", "Serin S Jose", "(8848681757 - )", "23:16", "23:34"],
  ["4", "XE021306260", "Sheethal Rajan", "(8304029250 - )", "00:00", "23:53"],
  ["5", "XE021308645", "Jeena Claire Ronald", "(9567450083 - )", "23:16", "23:56"],
];
const HEADS = ["#", "EMP ID", "EMP NAME", "ATT.", "ACT.TIME", "PLN.TIME", "Safe Home", "ACTION"];

function AttendancePanel() {
  return (
    <section className="mt-[8px] h-[351px] rounded-[3px] border-3 border-[#c1dcbf] bg-white pl-[16px] shadow-[0_2px_16px_rgba(0,0,0,0.22)]">
      <div className="flex h-[50px] w-[673px] items-end pb-[3px]">
        <svg viewBox="0 0 20 18" className="mb-[6px] h-[18px] w-[20px]" fill="none" stroke="#333" strokeWidth="1.600">
          <rect x=".8" y=".8" width="18.400" height="16.400" rx="1.500" />
          <path d="M.8 2h18.400" strokeWidth="2.400" />
          <path d="M1 7.700h18M1 12.300h18M6.900 2v15M13.100 2v15" />
        </svg>
        <h2 className="ml-[5px] text-[22px] leading-[30px] font-bold underline decoration-2 underline-offset-2">Attendance Details</h2>
        <svg viewBox="0 0 16 14" className="mb-[5px] ml-auto h-[14px] w-[16px]" fill="#0088cc">
          <circle cx="5.500" cy="3.600" r="3.400" />
          <path d="M0 11Q0 7 3 6.500q2.500 1.800 5 0 1.500.2 2.200 2H9v3h2.500V14H1.500Q0 14 0 12z" />
          <path d="M11.500 6.500h2V9H16v2h-2.500v2.500h-2V11H9.500V9h2z" />
        </svg>
        <span className="mr-[13px] mb-[2px] ml-[4px] leading-[19px] text-[#0088cc]">Person</span>
      </div>
      <table className="w-[673px] table-fixed border-collapse text-left leading-[14px]">
        <colgroup>
          <col className="w-[31px]" />
          <col className="w-[106px]" />
          <col className="w-[155px]" />
          <col className="w-[46px]" />
          <col className="w-[82px]" />
          <col className="w-[83px]" />
          <col className="w-[56px]" />
          <col className="w-[113px]" />
        </colgroup>
        <thead>
          <tr className="h-[53px] bg-[#3eae5a] text-white">
            {HEADS.map((h) => (
              <th key={h} className="border border-[#dddddd] px-[7.500px] font-bold">{h}</th>
            ))}
          </tr>
        </thead>
        <tbody>
          {PEOPLE.map(([n, id, name, tel, act, pln]) => (
            <tr key={n} className="h-[45px] odd:bg-[#f1f1f1]">
              <td className="border border-[#dddddd] px-[7.500px]">{n}</td>
              <td className="border border-[#dddddd] px-[7.500px]">{id}</td>
              <td className="border border-[#dddddd] px-[7.500px] whitespace-nowrap">{name}<br />{tel}</td>
              <td className="border border-[#dddddd] px-[7px]">
                {n === "4" ? (
                  <Glyph d={TIMES} className="h-[16px] w-[14px] text-[#f5485c]" />
                ) : (
                  <Glyph d={CHECK_SQUARE} className="h-[15px] w-[14px] text-[#2fa866]" />
                )}
              </td>
              <td className="border border-[#dddddd] px-[7.500px]">{act}</td>
              <td className="border border-[#dddddd] px-[7.500px]">{pln}</td>
              <td className="border border-[#dddddd] px-[7.500px]">NA</td>
              <td className="border border-[#dddddd] px-[8px]">
                {n === "4" ? (
                  <span className="flex h-[22px] w-[24px] items-center justify-center rounded-[3px] border border-[#3d8f4a] bg-linear-to-b from-[#5bbb6a] to-[#46a455]">
                    <Glyph d={CHECK} className="h-[11px] w-[11px] text-white" />
                  </span>
                ) : (
                  <span className="flex h-[22px] w-[70px] items-center justify-center rounded-[3px] border border-[#d0d0d0] border-b-[#bdbdbd] bg-[#e9e9e9] text-[10.500px] whitespace-nowrap text-[#858585]">
                    Not Allowed
                  </span>
                )}
              </td>
            </tr>
          ))}
        </tbody>
      </table>
    </section>
  );
}

/* ---------- timeline ---------- */

function TripCard({ title, raised, children }: Kids & { title: string; raised?: boolean }) {
  return (
    <article
      className={
        (raised ? "mt-[40px]" : "mt-[44px]") +
        " h-[140px] w-[263px] shrink-0 bg-[#e2e9e2] shadow-[0_1px_8px_rgba(0,0,0,0.16)]"
      }
    >
      <h3 className="flex h-[35px] items-center justify-center bg-[#428342] pt-[2px] text-[15px] font-bold text-white">{title}</h3>
      <div className="pt-[16px] pr-[15px] pl-[15.500px] leading-[14px]">{children}</div>
      {!raised && (
        <svg viewBox="0 0 130 2" className="mt-[19px] ml-[16px] h-[2px] w-[130px]" fill="#555">
          <path d="M2 1Q5-.5 8 1v1H2zM37 0h1.500v2H37zM114 0h1.500v2H114z" />
        </svg>
      )}
    </article>
  );
}

function Timeline() {
  return (
    <section className="ml-[16px] flex h-[160px] w-[1553px] gap-[107px] overflow-hidden rounded-t-[3px] border-3 border-[#c1dcbf] bg-white pl-[35px] shadow-[0_2px_16px_rgba(0,0,0,0.24)]">
      <TripCard title="23:03 - Present">
        <span className="flex font-['Liberation_Serif']">
          <Male className="mr-[3px] h-[14px] w-[9px]" />
          Govind N P ( 1307024 )
        </span>
      </TripCard>
      <TripCard title="23:04 - Absent">
        <span className="flex">
          <Female className="mr-[3.500px] h-[14px] w-[11px]" />
          Sheethal Rajan ( 1306260 )
        </span>
      </TripCard>
      <TripCard title="23:04 - Present">
        <span className="flex">
          <Female className="mr-[3.500px] h-[14px] w-[11px]" />
          Serin S Jose ( 1305778 )
        </span>
      </TripCard>
      <TripCard title="23:04 - Present" raised>
        <Female className="-mt-[2px] mr-[3px] inline h-[14px] w-[11px]" />
        Asha Mariya Joshy ( <br />
        IN010M56094 )
      </TripCard>
      <TripCard title="23:05 - Present" raised>
        <Female className="-mt-[2px] mr-[3px] inline h-[14px] w-[11px]" />
        Jeena Claire Ronald ( <br />
        XE021308645 )
      </TripCard>
    </section>
  );
}

/* ---------- page ---------- */

export default function App() {
  return (
    <div className="h-[900px] w-[1600px] overflow-hidden bg-white font-['Noto_Sans',sans-serif]">
      <TopBar />
      <TabStrip />
      <Toolbar />
      <BookmarkBar />
      <div className="flex h-[769px] overflow-hidden font-['Liberation_Sans',sans-serif] text-[14px] text-[#333]">
        <div className="h-full w-[1585px] overflow-hidden">
          <div className="flex h-[637px]">
            <div className="ml-[14px] w-[846px]">
              <div className="h-[447px] rounded-b-[3px] border-x-3 border-b-3 border-[#c1dcbf] shadow-[0_2px_16px_rgba(0,0,0,0.22)]">
                <MapView />
              </div>
              <Legend />
            </div>
            <div className="ml-[14px] w-[711px]">
              <TrackPanel />
              <AttendancePanel />
            </div>
          </div>
          <Timeline />
        </div>
        <div className="flex w-[15px] flex-col items-center bg-[#f1f1f1]">
          <div className="mt-[6px] flex"><Arrow up /></div>
          <div className="mt-[166px] h-[468px] w-[11px] bg-[#c1c1c1]" />
          <div className="mt-auto mb-[6px] flex"><Arrow /></div>
        </div>
      </div>
    </div>
  );
}
